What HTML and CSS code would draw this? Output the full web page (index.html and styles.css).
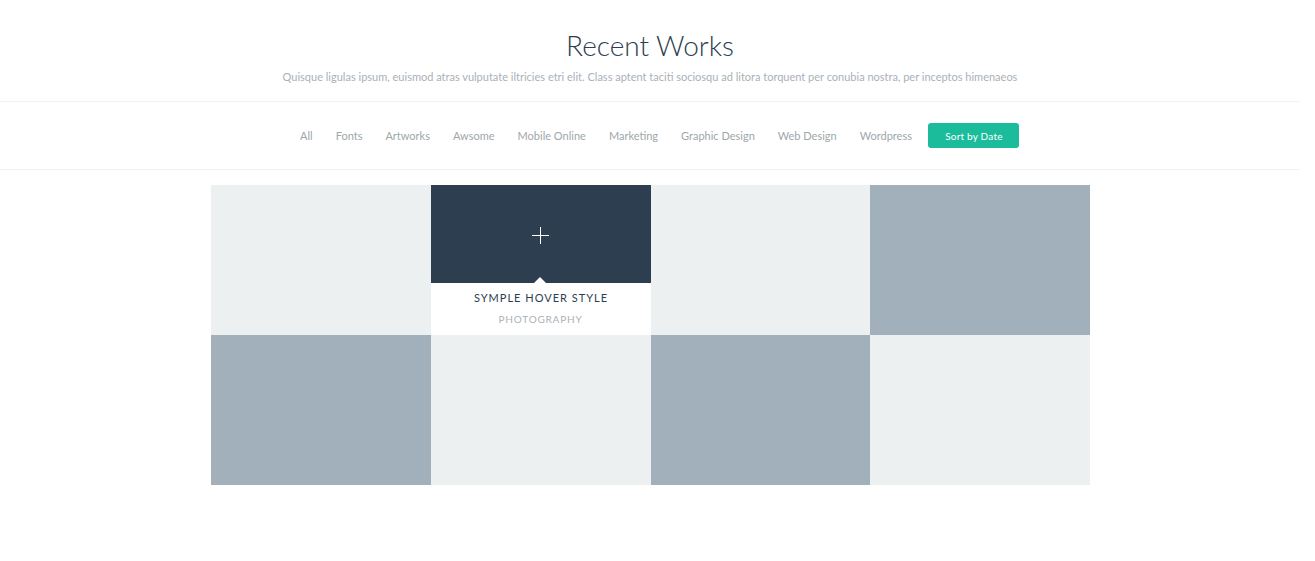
FILE: index.html
```html
<!DOCTYPE html>
<html lang="en">
<head>
<meta charset="utf-8">
<title>Recent Works</title>
<link rel="stylesheet" href="styles.css">
</head>
<body>
<div class="page">
  <header class="intro">
    <h1 class="title">Recent Works</h1>
    <p class="lead">Quisque ligulas ipsum, euismod atras vulputate iltricies etri elit. Class aptent taciti sociosqu ad litora torquent per conubia nostra, per inceptos himenaeos</p>
  </header>
  <nav class="filters">
    <a class="filter">All</a>
    <a class="filter">Fonts</a>
    <a class="filter">Artworks</a>
    <a class="filter">Awsome</a>
    <a class="filter">Mobile Online</a>
    <a class="filter">Marketing</a>
    <a class="filter">Graphic Design</a>
    <a class="filter">Web Design</a>
    <a class="filter">Wordpress</a>
    <button class="sort">Sort by Date</button>
  </nav>
  <section class="grid">
    <div class="tile light"></div>
    <div class="tile hover">
      <div class="cover">
        <span class="plus"></span>
        <span class="arrow"></span>
      </div>
      <div class="caption">
        <div class="cap-title">SYMPLE HOVER STYLE</div>
        <div class="cap-sub">PHOTOGRAPHY</div>
      </div>
    </div>
    <div class="tile light"></div>
    <div class="tile grey"></div>
    <div class="tile grey"></div>
    <div class="tile light"></div>
    <div class="tile grey"></div>
    <div class="tile light"></div>
  </section>
</div>
</body>
</html>
```

FILE: styles.css
```css
* { box-sizing: border-box; }
html, body { margin: 0; padding: 0; background: #fff; }
body { font-family: Lato, "Open Sans", sans-serif; }
.page { width: 1300px; }

.intro {
  text-align: center;
  padding-top: 27px;
  height: 102px;
  border-bottom: 1px solid #f3f3f3;
}
.title {
  margin: 0;
  font-weight: 300;
  font-size: 28px;
  line-height: 36px;
  color: #2c3e50;
}
.lead {
  margin: 5px 0 0;
  font-size: 11px;
  line-height: 18px;
  color: #a9b1b8;
}

.filters {
  height: 68px;
  border-bottom: 1px solid #f3f3f3;
  display: flex;
  align-items: center;
  justify-content: center;
  padding-left: 8px;
}
.filter {
  font-size: 11px;
  color: #9ea7aa;
  padding: 0 11.5px;
  cursor: pointer;
}
.sort {
  margin-left: 5px;
  background: #1abc9c;
  color: #fff;
  border: 0;
  border-radius: 3px;
  font-family: Lato, sans-serif;
  font-size: 10px;
  letter-spacing: 0.2px;
  width: 91px;
  height: 25px;
  padding: 0;
}

.grid {
  width: 879px;
  margin: 15px auto 0;
  display: grid;
  grid-template-columns: 220px 220px 219px 220px;
  grid-auto-rows: 150px;
}
.tile.light { background: #ecf0f1; }
.tile.grey { background: #a1b0ba; }
.tile.hover { display: flex; flex-direction: column; background: #fff; }
.cover {
  position: relative;
  height: 98px;
  background: #2c3e50;
}
.plus {
  position: absolute;
  left: 101px;
  top: 42px;
  width: 17px;
  height: 17px;
}
.plus::before, .plus::after {
  content: "";
  position: absolute;
  background: #fff;
}
.plus::before { left: 0; top: 8px; width: 17px; height: 1px; }
.plus::after { left: 8px; top: 0; width: 1px; height: 17px; }
.arrow {
  position: absolute;
  left: 103px;
  bottom: 0;
  width: 0;
  height: 0;
  border-left: 6px solid transparent;
  border-right: 6px solid transparent;
  border-bottom: 6px solid #fff;
}
.caption {
  text-align: center;
  padding-top: 8px;
}
.cap-title {
  font-size: 11px;
  letter-spacing: 1px;
  color: #2c3e50;
  line-height: 14px;
  padding-left: 1px;
}
.cap-sub {
  margin-top: 8px;
  font-size: 10px;
  letter-spacing: 0.8px;
  color: #a9b1b8;
  line-height: 12px;
}
```
